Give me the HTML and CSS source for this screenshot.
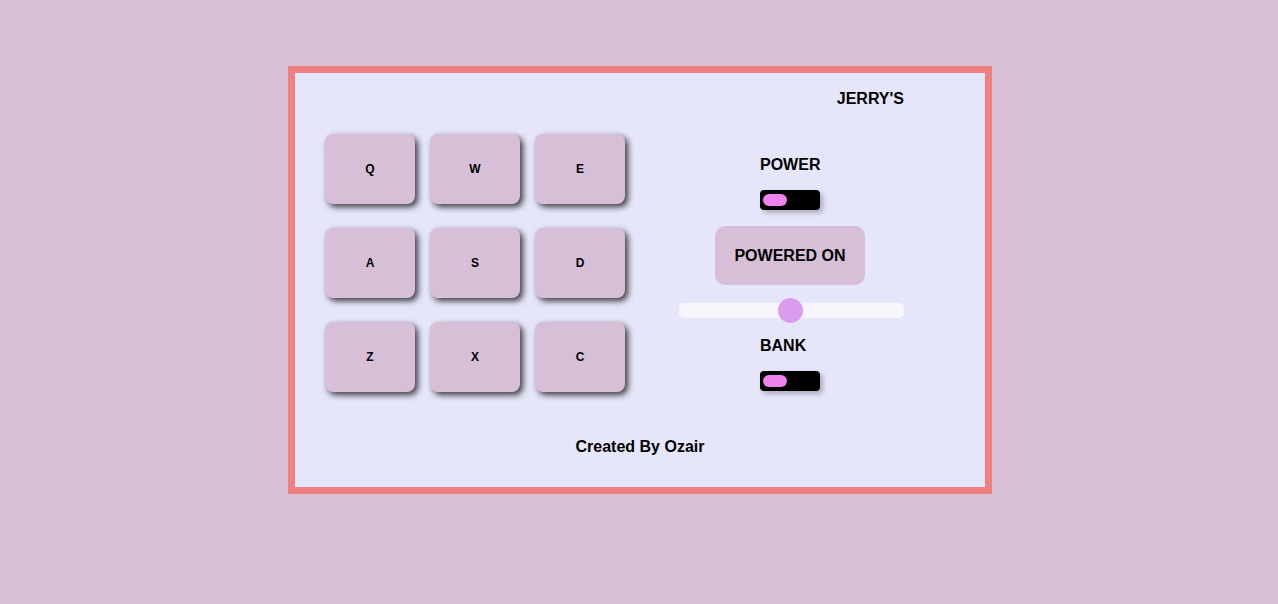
FILE: index.html
```html
<!DOCTYPE html>
<html>
<head>
<meta charset="utf-8">
<link rel="stylesheet" href="styles.css">
</head>
<body>
<div class="machine">
  <div class="brand">JERRY'S</div>
  <div class="main">
    <div class="pads">
      <div class="pad">Q</div>
      <div class="pad">W</div>
      <div class="pad">E</div>
      <div class="pad">A</div>
      <div class="pad">S</div>
      <div class="pad">D</div>
      <div class="pad">Z</div>
      <div class="pad">X</div>
      <div class="pad">C</div>
    </div>
    <div class="controls">
      <div class="control power">
        <div class="label">POWER</div>
        <div class="toggle"><div class="knob"></div></div>
      </div>
      <div class="display">POWERED ON</div>
      <div class="slider"><div class="thumb"></div></div>
      <div class="control bank">
        <div class="label">BANK</div>
        <div class="toggle"><div class="knob"></div></div>
      </div>
    </div>
  </div>
  <div class="credit">Created By Ozair</div>
</div>
</body>
</html>
```

FILE: styles.css
```css
html, body {
  margin: 0;
  padding: 0;
  background: #d8bfd8;
  font-family: "Liberation Sans", Arial, sans-serif;
  color: #000;
}

.machine {
  box-sizing: border-box;
  width: 704px;
  margin: 66px 0 0 288px;
  border: 7px solid #f08080;
  background: #e6e6fa;
  padding: 16px 0 30px 0;
}

.brand {
  font-weight: bold;
  font-size: 16px;
  line-height: 20px;
  text-align: right;
  padding-right: 81px;
}

.main {
  display: flex;
  margin-top: 25px;
  padding-left: 30px;
  gap: 54px;
  align-items: flex-start;
}

.pads {
  display: grid;
  grid-template-columns: repeat(3, 90px);
  grid-auto-rows: 70px;
  column-gap: 15px;
  row-gap: 24px;
}

.pad {
  background: #d8bfd8;
  border-radius: 8px;
  box-shadow: 3px 3px 6px rgba(0, 0, 0, 0.75);
  display: flex;
  align-items: center;
  justify-content: center;
  font-weight: bold;
  font-size: 12px;
}

.controls {
  width: 225px;
  display: flex;
  flex-direction: column;
  align-items: center;
}

.control {
  width: 60px;
  margin-left: -3px;
}

.power {
  margin-top: 21px;
}

.bank {
  margin-top: 18px;
}

.label {
  font-weight: bold;
  font-size: 16px;
  line-height: 20px;
  white-space: nowrap;
}

.toggle {
  margin-top: 15px;
  width: 60px;
  height: 20px;
  background: #000;
  border-radius: 4px;
  box-shadow: 3px 3px 5px rgba(0, 0, 0, 0.25);
  position: relative;
}

.knob {
  position: absolute;
  left: 3px;
  top: 4px;
  width: 24px;
  height: 12px;
  border-radius: 6px;
  background: #ee82ee;
}

.display {
  margin-top: 16px;
  margin-left: -3px;
  width: 150px;
  height: 59px;
  background: #d8bfd8;
  border-radius: 10px;
  display: flex;
  align-items: center;
  justify-content: center;
  font-weight: bold;
  font-size: 16px;
}

.slider {
  margin-top: 18px;
  width: 225px;
  height: 15px;
  background: #f8f6fd;
  border-radius: 5px;
  position: relative;
}

.thumb {
  position: absolute;
  left: 99px;
  top: -5px;
  width: 25px;
  height: 25px;
  border-radius: 50%;
  background: #db9cee;
}

.credit {
  margin-top: 45px;
  text-align: center;
  font-weight: bold;
  font-size: 16px;
  line-height: 20px;
}
```
